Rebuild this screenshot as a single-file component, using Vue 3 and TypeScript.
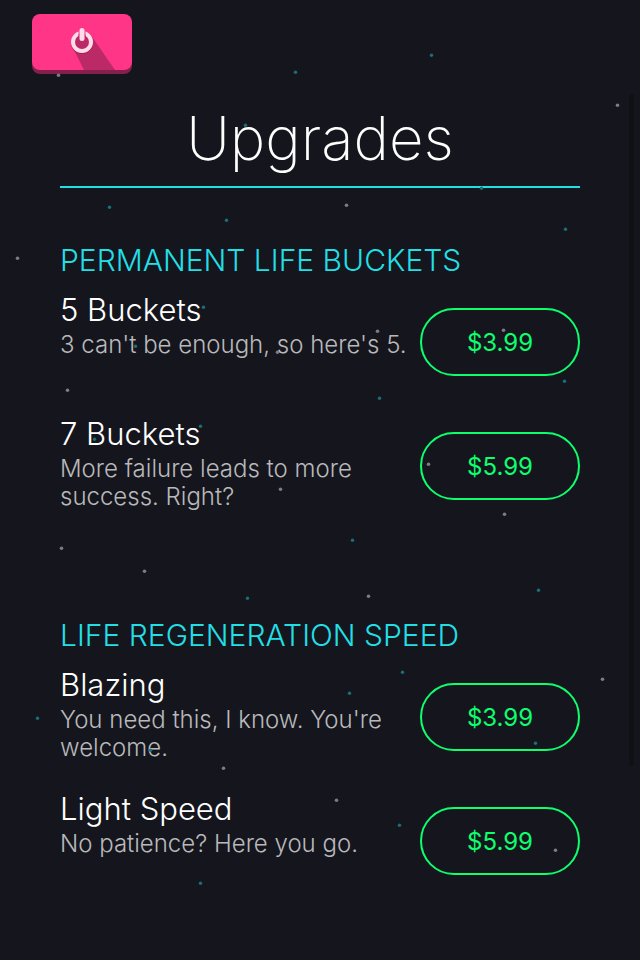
<script setup lang="ts">
interface Upgrade {
  name: string
  description: string
  price: string
}

interface UpgradeGroup {
  title: string
  items: Upgrade[]
}

type Star = [x: number, y: number]

const groups: UpgradeGroup[] = [
  {
    title: 'PERMANENT LIFE BUCKETS',
    items: [
      { name: '5 Buckets', description: "3 can't be enough, so here's 5.", price: '$3.99' },
      { name: '7 Buckets', description: 'More failure leads to more success. Right?', price: '$5.99' },
    ],
  },
  {
    title: 'LIFE REGENERATION SPEED',
    items: [
      { name: 'Blazing', description: "You need this, I know. You're welcome.", price: '$3.99' },
      { name: 'Light Speed', description: 'No patience? Here you go.', price: '$5.99' },
    ],
  },
]

const whiteStars: Star[] = [
  [58, 75], [617, 105], [346, 205], [17, 258], [377, 331], [277, 352], [503, 330],
  [67, 390], [428, 464], [280, 489], [504, 514], [61, 548], [144, 571], [368, 596],
  [602, 679], [223, 768], [336, 800], [555, 850],
]

const tealStars: Star[] = [
  [431, 55], [295, 72], [245, 125], [481, 188], [109, 207], [226, 220], [565, 229],
  [203, 307], [135, 346], [564, 381], [379, 398], [200, 426], [94, 439], [352, 540],
  [247, 598], [538, 590], [402, 672], [349, 693], [37, 718], [535, 743], [150, 750],
  [399, 825], [200, 883],
]
</script>

<template>
  <div class="screen">
    <header class="topbar">
      <button class="power" type="button" aria-label="Exit">
        <svg class="power-art" viewBox="0 0 100 56" aria-hidden="true">
          <path d="M40.500 33 L52 56 H83 L59.500 22 Z" fill="#bb2a67" />
          <circle cx="50" cy="29" r="9" fill="none" stroke="#9c2357" stroke-width="4" />
          <circle cx="50" cy="28" r="7" fill="#bb2a67" />
          <circle cx="50" cy="28" r="9" fill="none" stroke="#ffdce9" stroke-width="4" />
          <path d="M50 16.500 V23" stroke="#ff3587" stroke-width="7" />
          <path d="M50 22 V26" stroke="#bb2a67" stroke-width="7" stroke-linecap="round" />
          <path d="M50 16.500 V24.500" stroke="#ffdce9" stroke-width="5" stroke-linecap="round" />
        </svg>
      </button>
    </header>

    <main class="content">
      <h1 class="title">Upgrades</h1>
      <section v-for="group in groups" :key="group.title" class="group">
        <h2 class="group-title">{{ group.title }}</h2>
        <ul class="items">
          <li v-for="item in group.items" :key="item.name" class="item">
            <div class="info">
              <h3 class="name">{{ item.name }}</h3>
              <p class="description">{{ item.description }}</p>
            </div>
            <button class="price" type="button">{{ item.price }}</button>
          </li>
        </ul>
      </section>
    </main>

    <svg class="stars" aria-hidden="true">
      <g transform="translate(0.5 0.3)">
        <circle v-for="([x, y], i) in whiteStars" :key="`w${i}`" :cx="x" :cy="y" r="1.800" fill="#7c7c82" />
        <circle v-for="([x, y], i) in tealStars" :key="`t${i}`" :cx="x" :cy="y" r="1.700" fill="#1a6f79" />
      </g>
    </svg>
    <div class="scroll-thumb" aria-hidden="true"></div>
  </div>
</template>

<style>
body {
  margin: 0;
  background: #15161d;
}
</style>

<style scoped>
.screen {
  position: relative;
  min-height: 100vh;
  box-sizing: border-box;
  overflow: hidden;
  background: #15161d;
  color: #fff;
  font-family: Inter, "Liberation Sans", sans-serif;
}

.topbar {
  display: flex;
  padding: 14px 32px 0;
}

.power {
  width: 100px;
  height: 56px;
  padding: 0;
  border: 0;
  border-radius: 8px;
  background: #ff3587;
  box-shadow: 0 4px 0 #851f4b;
  cursor: pointer;
}

.power-art {
  display: block;
  width: 100%;
  height: 100%;
}

.content {
  padding: 28px 60px 12px;
}

.title {
  margin: 0;
  padding-bottom: 8px;
  border-bottom: 2px solid #22dfe6;
  font-size: 60px;
  font-weight: 200;
  line-height: 80px;
  text-align: center;
}

.group {
  padding: 52px 0 24px;
}

.group + .group {
  padding-top: 51px;
}

.group-title,
.name {
  margin: 0;
  font-weight: 300;
}

.group-title {
  font-size: 30px;
  line-height: 40px;
  color: #22dfe6;
}

.items {
  margin: 0;
  padding: 12px 0 0;
  list-style: none;
}

.item {
  display: flex;
  align-items: flex-start;
  justify-content: space-between;
  gap: 12px;
  min-height: 124px;
}

.info {
  flex: 1;
  min-width: 0;
}

.name {
  font-size: 31px;
  line-height: 36px;
}

.description {
  margin: 3px 0 0;
  font-size: 24px;
  font-weight: 300;
  line-height: 28px;
  color: #b9b9bc;
}

.price {
  flex: none;
  width: 160px;
  height: 68px;
  margin-top: 16px;
  padding: 0;
  border: 2px solid #0dff6e;
  border-radius: 34px;
  background: transparent;
  color: #0dff6e;
  font: 400 24px Inter, "Liberation Sans", sans-serif;
  cursor: pointer;
}

.stars {
  position: absolute;
  inset: 0;
  width: 100%;
  height: 100%;
  pointer-events: none;
}

.scroll-thumb {
  position: absolute;
  top: 94px;
  right: 6px;
  width: 5px;
  height: 70%;
  border-radius: 3px;
  background: #101115;
}
</style>
